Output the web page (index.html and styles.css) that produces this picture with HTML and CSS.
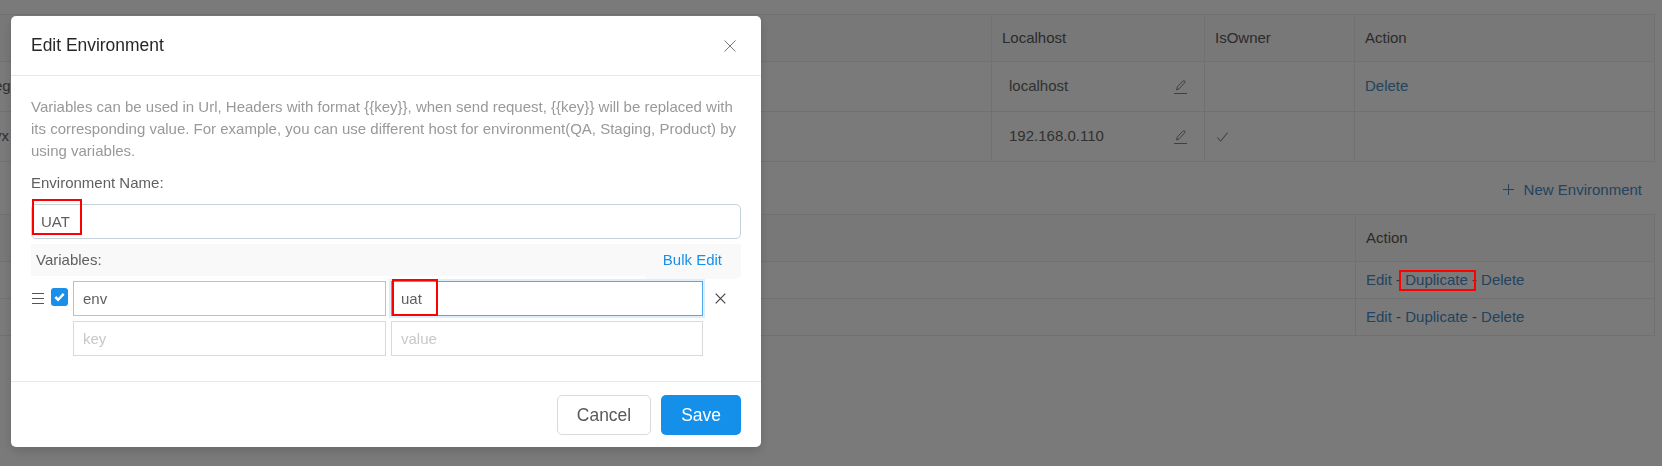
FILE: index.html
```html
<!DOCTYPE html>
<html lang="en">
<head>
<meta charset="utf-8">
<title>Edit Environment</title>
<link rel="stylesheet" href="styles.css">
</head>
<body>
<div class="page">
  <div class="tbl tbl-top">
    <div class="row row-head">
      <div class="cell cell-name"></div>
      <div class="cell cell-host">Localhost</div>
      <div class="cell cell-owner">IsOwner</div>
      <div class="cell cell-act">Action</div>
    </div>
    <div class="row row-a">
      <div class="cell cell-name"><span class="clip">eg</span></div>
      <div class="cell cell-host host-edit"><span>localhost</span>
        <svg class="pen" viewBox="0 0 13 14"><path d="M2.6 10 L3.3 6.9 L8.9 1.2 Q9.9 .4 10.7 1.1 Q11.4 1.9 10.6 2.9 L5 8.9 Z M0 13.5 H13" fill="none" stroke="currentColor" stroke-width=".8"/></svg>
      </div>
      <div class="cell cell-owner"></div>
      <div class="cell cell-act"><a class="link">Delete</a></div>
    </div>
    <div class="row row-b">
      <div class="cell cell-name"><span class="clip">vx</span></div>
      <div class="cell cell-host host-edit"><span>192.168.0.110</span>
        <svg class="pen" viewBox="0 0 13 14"><path d="M2.6 10 L3.3 6.9 L8.9 1.2 Q9.9 .4 10.7 1.1 Q11.4 1.9 10.6 2.9 L5 8.9 Z M0 13.5 H13" fill="none" stroke="currentColor" stroke-width=".8"/></svg>
      </div>
      <div class="cell cell-owner"><svg class="tick" viewBox="0 0 11 10"><path d="M0.4 5.4 L3.6 9.2 L10.6 0.6" fill="none" stroke="currentColor" stroke-width=".9"/></svg></div>
      <div class="cell cell-act"></div>
    </div>
  </div>
  <div class="new-env">
    <a class="link new-link"><svg class="plus" viewBox="0 0 11 11"><path d="M5.5 0 V11 M0 5.5 H11" fill="none" stroke="currentColor" stroke-width="1"/></svg>New Environment</a>
  </div>
  <div class="tbl tbl-bottom">
    <div class="row row-head">
      <div class="cell cell-main"></div>
      <div class="cell cell-act2">Action</div>
    </div>
    <div class="row row-c">
      <div class="cell cell-main"></div>
      <div class="cell cell-act2 act-links"><a class="link">Edit</a> - <a class="link">Duplicate</a> - <a class="link">Delete</a><span class="mark mark-dup"></span></div>
    </div>
    <div class="row row-d">
      <div class="cell cell-main"></div>
      <div class="cell cell-act2 act-links"><a class="link">Edit</a> - <a class="link">Duplicate</a> - <a class="link">Delete</a></div>
    </div>
  </div>
</div>
<div class="overlay"></div>
<div class="modal">
  <div class="m-head">
    <span class="m-title">Edit Environment</span>
    <svg class="m-close" viewBox="0 0 12 12"><path d="M0.5 0.5 L11.5 11.5 M11.5 0.5 L0.5 11.5" fill="none" stroke="currentColor" stroke-width="1"/></svg>
  </div>
  <div class="m-body">
    <p class="hint">Variables can be used in Url, Headers with format {{key}}, when send request, {{key}} will be replaced with its corresponding value. For example, you can use different host for environment(QA, Staging, Product) by using variables.</p>
    <div class="label">Environment Name:</div>
    <div class="name-input"><span>UAT</span><span class="mark mark-name"></span></div>
    <div class="vars-head"><span>Variables:</span><a class="bulk">Bulk Edit</a></div>
    <div class="var-row">
      <svg class="drag" viewBox="0 0 12 11"><path d="M0 .5 H12 M0 5.5 H12 M0 10.5 H12" fill="none" stroke="currentColor" stroke-width="1"/></svg>
      <span class="check"><svg viewBox="0 0 12 10"><path d="M1.5 5 L4.5 8 L10.5 1.6" fill="none" stroke="#fff" stroke-width="2.7"/></svg></span>
      <div class="field field-key-active">env</div>
      <div class="field field-focus">uat<span class="mark mark-uat"></span></div>
      <svg class="var-x" viewBox="0 0 11 11"><path d="M0.7 0.7 L10.3 10.3 M10.3 0.7 L0.7 10.3" fill="none" stroke="currentColor" stroke-width="1.2"/></svg>
    </div>
    <div class="var-row-new">
      <div class="field field-ph">key</div>
      <div class="field field-ph field-val">value</div>
    </div>
  </div>
  <div class="m-foot">
    <button class="btn btn-cancel">Cancel</button>
    <button class="btn btn-save">Save</button>
  </div>
</div>
</body>
</html>
```
FILE: styles.css
```css
* { box-sizing: border-box; }
html, body { margin: 0; height: 100%; }
body {
  width: 1662px; height: 466px; overflow: hidden; background: #fff;
  font-family: "Liberation Sans", Arial, sans-serif;
  font-size: 15px; color: #666;
}
.page { padding: 14px 7px 0 0; }
.tbl { border: 1px solid #ececec; border-left: 0; }
.row { display: flex; border-bottom: 1px solid #ececec; }
.row:last-child { border-bottom: 0; }
.row-head { color: #5a5a5a; background: #fafafa; height: 47px; }
.row-a { height: 50px; }
.row-b { height: 49px; }
.row-c { height: 37px; }
.row-d { height: 36px; }
.cell { display: flex; align-items: center; padding-bottom: 2px; border-right: 1px solid #ececec; }
.cell:last-child { border-right: 0; }
.cell-name { width: 992px; }
.clip { margin-left: -6px; }
.cell-host { width: 213px; padding-left: 10px; }
.host-edit { padding-left: 17px; padding-right: 17px; justify-content: space-between; }
.cell-owner { width: 150px; padding-left: 10px; }
.cell-act { flex: 1; padding-left: 10px; }
.cell-main { width: 1356px; }
.cell-act2 { flex: 1; padding-left: 10px; position: relative; white-space: pre; }
.link { color: #4a8cc8; }
.pen { width: 13px; height: 14px; margin-top: 3px; color: #666; }
.tick { width: 11px; height: 10px; margin: 2px 0 0 2px; color: #666; }
.new-env { height: 52px; display: flex; justify-content: flex-end; align-items: center; padding: 3px 13px 0 0; }
.new-link { display: flex; align-items: center; gap: 10px; }
.plus { width: 11px; height: 11px; }
.mark { position: absolute; border: 2px solid #f00; }
.mark-dup { left: 43px; top: 8px; width: 77px; height: 21px; z-index: 2; }
.overlay { position: fixed; inset: 0; z-index: 1; background: rgba(0,0,0,.52); }
.modal {
  position: fixed; left: 11px; top: 16px; z-index: 1; width: 750px; height: 431px;
  background: #fff; border-radius: 5px; box-shadow: 0 4px 12px rgba(0,0,0,.15);
  display: flex; flex-direction: column; color: #5f5f5f;
}
.m-head { height: 60px; border-bottom: 1px solid #e8e8e8; display: flex; align-items: center; justify-content: space-between; padding: 0 25px 0 20px; flex: none; }
.m-title { font-size: 17.45px; color: #262626; }
.m-close { width: 12px; height: 12px; color: #777; }
.m-body { flex: 1; padding: 20px 20px 0; }
.hint { margin: 0; color: #999; line-height: 22px; }
.label { margin-top: 10px; line-height: 22px; }
.name-input { position: relative; height: 35px; margin-top: 10px; border: 1px solid #c5d2d8; border-radius: 5px; padding: 0 9px; display: flex; align-items: center; }
.mark-name { left: 0; top: -6px; width: 50px; height: 36px; }
.vars-head { height: 35px; margin-top: 5px; padding: 0 19px 5px 5px; background: #f9f9f9; border-radius: 0 0 5px 5px; display: flex; align-items: center; justify-content: space-between; }
.bulk { color: #1890e8; }
.var-row { display: flex; align-items: flex-start; margin-top: -3px; height: 40px; padding-top: 5px; background: linear-gradient(#fff, #fff) no-repeat 0 0 / 614px 100%; }
.var-row-new { display: flex; margin-top: 5px; padding-left: 42px; }
.drag { flex: none; width: 12px; height: 11px; margin: 12px 0 0 1px; color: #555; }
.check { flex: none; width: 17px; height: 18px; margin: 7px 5px 0 7px; background: #1890ea; border-radius: 3px; display: flex; align-items: center; justify-content: center; }
.check svg { width: 11px; height: 10px; }
.field { flex: none; width: 313px; height: 35px; border: 1px solid #d9d9d9; padding: 0 9px; display: flex; align-items: center; position: relative; }
.field + .field { margin-left: 5px; }
.field-key-active { border-color: #a5c6dc; }
.field-focus { width: 312px; border-color: #52a8ec; box-shadow: 0 0 0 2px rgba(24,144,255,.15); }
.field-val { width: 312px; }
.mark-uat { left: 0; top: -3px; width: 46px; height: 37px; }
.field-ph { color: #c8c8c8; }
.var-x { flex: none; width: 11px; height: 11px; margin: 12px 0 0 12px; color: #444; }
.m-foot { height: 66px; border-top: 1px solid #e8e8e8; display: flex; align-items: flex-start; justify-content: flex-end; gap: 10px; padding: 13px 20px 0; flex: none; }
.btn { font: inherit; font-size: 17.45px; height: 40px; border-radius: 5px; cursor: pointer; padding: 0; }
.btn-cancel { width: 94px; background: #fff; border: 1px solid #d9d9d9; color: #595959; }
.btn-save { width: 80px; background: #1490ea; border: 0; color: #fff; }
```
